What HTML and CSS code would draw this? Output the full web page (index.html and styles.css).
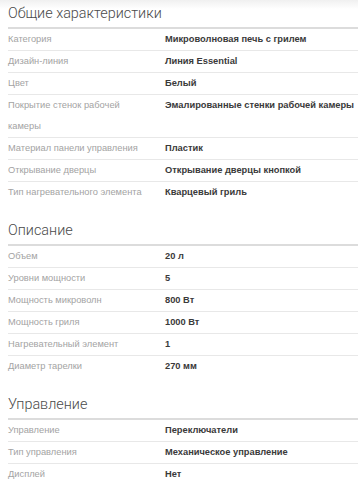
FILE: index.html
```html
<!DOCTYPE html>
<html lang="ru">
<head>
    <meta charset="UTF-8">
    <title>Характеристики</title>
    <meta name="viewport" content="width=device-width, initial-scale=1.0">
    <link rel="stylesheet" href="styles.css">
</head>
<body>
    <section class="spec-group">
        <h2>Общие характеристики</h2>
        <table class="spec-table">
            <tr><td class="spec-name">Категория</td><td class="spec-value">Микроволновая печь с грилем</td></tr>
            <tr><td class="spec-name">Дизайн-линия</td><td class="spec-value">Линия Essential</td></tr>
            <tr><td class="spec-name">Цвет</td><td class="spec-value">Белый</td></tr>
            <tr><td class="spec-name">Покрытие стенок рабочей камеры</td><td class="spec-value">Эмалированные стенки рабочей камеры</td></tr>
            <tr><td class="spec-name">Материал панели управления</td><td class="spec-value">Пластик</td></tr>
            <tr><td class="spec-name">Открывание дверцы</td><td class="spec-value">Открывание дверцы кнопкой</td></tr>
            <tr><td class="spec-name">Тип нагревательного элемента</td><td class="spec-value">Кварцевый гриль</td></tr>
        </table>
    </section>
    <section class="spec-group">
        <h2>Описание</h2>
        <table class="spec-table">
            <tr><td class="spec-name">Объем</td><td class="spec-value">20 л</td></tr>
            <tr><td class="spec-name">Уровни мощности</td><td class="spec-value">5</td></tr>
            <tr><td class="spec-name">Мощность микроволн</td><td class="spec-value">800 Вт</td></tr>
            <tr><td class="spec-name">Мощность гриля</td><td class="spec-value">1000 Вт</td></tr>
            <tr><td class="spec-name">Нагревательный элемент</td><td class="spec-value">1</td></tr>
            <tr><td class="spec-name">Диаметр тарелки</td><td class="spec-value">270 мм</td></tr>
        </table>
    </section>
    <section class="spec-group">
        <h2>Управление</h2>
        <table class="spec-table">
            <tr><td class="spec-name">Управление</td><td class="spec-value">Переключатели</td></tr>
            <tr><td class="spec-name">Тип управления</td><td class="spec-value">Механическое управление</td></tr>
            <tr><td class="spec-name">Дисплей</td><td class="spec-value">Нет</td></tr>
        </table>
    </section>
</body>
</html>
```

FILE: styles.css
```css
body {
    font-family: "Liberation Sans", Arial, sans-serif;
    background: linear-gradient(#f0f0f0, #fff 9px) no-repeat #fff;
    margin: 0;
    padding: 4px 0 0 8px;
}
.spec-group {
    margin-bottom: 18px;
}
.spec-group h2 {
    font-family: Roboto, "Liberation Sans", sans-serif;
    font-size: 14.4px;
    font-weight: 300;
    line-height: 20px;
    color: #4a4a4a;
    margin: 0;
    padding-bottom: 3px;
    border-bottom: 2px solid #dcdcdc;
}
.spec-table {
    width: 100%;
    border-collapse: collapse;
    font-size: 9.3px;
}
.spec-table td {
    padding: 0;
    line-height: 21px;
    vertical-align: top;
}
.spec-table tr + tr td {
    border-top: 1px solid #e8e8e8;
}
.spec-name {
    width: 140px;
    padding-right: 17px !important;
    color: #a3a3a3;
}
.spec-value {
    font-weight: bold;
    color: #3a3a3a;
}
```
